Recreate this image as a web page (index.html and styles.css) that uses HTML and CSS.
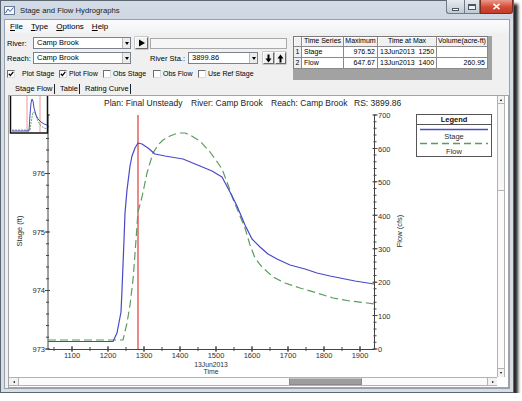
FILE: index.html
```html
<!DOCTYPE html>
<html>
<head>
<meta charset="utf-8">
<title>Stage and Flow Hydrographs</title>
<link rel="stylesheet" href="styles.css">
</head>
<body>
<div class="window">
  <div class="titlebar">
    <svg class="appicon" width="11" height="9" viewBox="0 0 11 9">
      <rect x="0.5" y="0.5" width="10" height="8" fill="#f4f7fb" stroke="#6a7c96"/>
      <polyline points="1.5,7 4,3 6,5.5 9.5,1.5" fill="none" stroke="#3a62b8" stroke-width="1"/>
    </svg>
    <span class="title">Stage and Flow Hydrographs</span>
    <div class="caption">
      <div class="cbtn cmin"><i></i></div>
      <div class="cbtn cmax"><i></i></div>
      <div class="cbtn cclose">
        <svg width="9" height="7" viewBox="0 0 9 7"><path d="M1.5 0.8 L7.5 6.2 M7.5 0.8 L1.5 6.2" stroke="#ffffff" stroke-width="1.6"/></svg>
      </div>
    </div>
  </div>
  <div class="client">
    <div class="menubar">
      <span><u>F</u>ile</span>
      <span><u>T</u>ype</span>
      <span><u>O</u>ptions</span>
      <span><u>H</u>elp</span>
    </div>
    <div class="top">
      <div class="leftcol">
        <div class="row">
          <span class="lbl lbl-river">River:</span>
          <div class="combo combo-wide"><span class="val">Camp Brook</span><span class="drop"></span></div>
          <div class="btn btn-play">
            <svg width="9" height="8" viewBox="0 0 9 8"><polygon points="2,0.5 2,7.5 8,4" fill="#000"/></svg>
          </div>
          <div class="textbox"></div>
        </div>
        <div class="row row2">
          <span class="lbl lbl-river">Reach:</span>
          <div class="combo combo-wide"><span class="val">Camp Brook</span><span class="drop"></span></div>
          <span class="lbl lbl-sta">River Sta.:</span>
          <div class="combo combo-sta"><span class="val">3899.86</span><span class="drop"></span></div>
          <div class="btn btn-arrow btn-down">
            <svg width="7" height="9" viewBox="0 0 7 9"><rect x="2.5" y="0.5" width="2" height="4.5" fill="#000"/><polygon points="0.5,4.5 6.5,4.5 3.5,8.5" fill="#000"/></svg>
          </div>
          <div class="btn btn-arrow btn-up">
            <svg width="7" height="9" viewBox="0 0 7 9"><rect x="2.5" y="4" width="2" height="4.5" fill="#000"/><polygon points="0.5,4.5 6.5,4.5 3.5,0.5" fill="#000"/></svg>
          </div>
        </div>
        <div class="checks">
          <label class="chk chk-first"><span class="box on"><svg width="6" height="6" viewBox="0 0 6 6"><path d="M0.8 2.8 L2.4 4.6 L5.3 0.9" fill="none" stroke="#000" stroke-width="1.3"/></svg></span>Plot Stage</label>
          <label class="chk"><span class="box on"><svg width="6" height="6" viewBox="0 0 6 6"><path d="M0.8 2.8 L2.4 4.6 L5.3 0.9" fill="none" stroke="#000" stroke-width="1.3"/></svg></span>Plot Flow</label>
          <label class="chk"><span class="box"></span>Obs Stage</label>
          <label class="chk"><span class="box"></span>Obs Flow</label>
          <label class="chk"><span class="box"></span>Use Ref Stage</label>
        </div>
      </div>
      <div class="gridwrap">
        <div class="tbl">
          <div class="th"></div>
          <div class="th">Time Series</div>
          <div class="th">Maximum</div>
          <div class="th">Time at Max</div>
          <div class="th">Volume(acre-ft)</div>
          <div class="rn">1</div>
          <div class="td">Stage</div>
          <div class="td num">976.52</div>
          <div class="td">13Jun2013  1250</div>
          <div class="td num"></div>
          <div class="rn">2</div>
          <div class="td">Flow</div>
          <div class="td num">647.67</div>
          <div class="td">13Jun2013  1400</div>
          <div class="td num">260.95</div>
        </div>
      </div>
    </div>
    <div class="tabs">
      <span class="tab">Stage Flow</span>
      <span class="tab">Table</span>
      <span class="tab">Rating Curve</span>
    </div>
    <div class="plotpanel">
      <svg class="chart" width="488" height="281" viewBox="9 96 488 281">
        <!-- title -->
        <text class="ttl" y="106"><tspan x="104">Plan: Final Unsteady</tspan><tspan x="191">River: Camp Brook</tspan><tspan x="271">Reach: Camp Brook</tspan><tspan x="354">RS: 3899.86</tspan></text>

        <!-- axes -->
        <path d="M48 115 V349.5 H374.5 V115" fill="none" stroke="#444" stroke-width="1"/>
        <line x1="47.5" y1="349.5" x2="47.5" y2="114" stroke="#444" stroke-width="3" stroke-dasharray="1 10.7"/>
        <line x1="47.5" y1="349.5" x2="47.5" y2="114" stroke="#444" stroke-width="5" stroke-dasharray="1 57.5"/>
        <line x1="375" y1="349.5" x2="375" y2="114" stroke="#444" stroke-width="3" stroke-dasharray="1 5.686"/>
        <line x1="375" y1="349.5" x2="375" y2="114" stroke="#444" stroke-width="5" stroke-dasharray="1 32.43"/>
        <line x1="53.5" y1="349" x2="374" y2="349" stroke="#444" stroke-width="4" stroke-dasharray="1 17"/>
        <line x1="71.5" y1="349" x2="374" y2="349" stroke="#444" stroke-width="6" stroke-dasharray="1 35"/>

        <!-- left labels -->
        <text class="lab" x="45" y="176" text-anchor="end">976</text>
        <text class="lab" x="45" y="235" text-anchor="end">975</text>
        <text class="lab" x="45" y="293" text-anchor="end">974</text>
        <text class="lab" x="45" y="352" text-anchor="end">973</text>
        <!-- right labels -->
        <text class="lab" x="378" y="118">700</text>
        <text class="lab" x="378" y="151.5">600</text>
        <text class="lab" x="378" y="185">500</text>
        <text class="lab" x="378" y="218.5">400</text>
        <text class="lab" x="378" y="252">300</text>
        <text class="lab" x="378" y="285">200</text>
        <text class="lab" x="378" y="318.5">100</text>
        <text class="lab" x="378" y="352">0</text>
        <!-- bottom labels -->
        <text class="lab" x="72" y="358.3" text-anchor="middle">1100</text>
        <text class="lab" x="108" y="358.3" text-anchor="middle">1200</text>
        <text class="lab" x="144" y="358.3" text-anchor="middle">1300</text>
        <text class="lab" x="180" y="358.3" text-anchor="middle">1400</text>
        <text class="lab" x="216" y="358.3" text-anchor="middle">1500</text>
        <text class="lab" x="252" y="358.3" text-anchor="middle">1600</text>
        <text class="lab" x="288" y="358.3" text-anchor="middle">1700</text>
        <text class="lab" x="324" y="358.3" text-anchor="middle">1800</text>
        <text class="lab" x="360" y="358.3" text-anchor="middle">1900</text>
        <text class="lab sm" x="211" y="366.6" text-anchor="middle">13Jun2013</text>
        <text class="lab sm" x="211" y="374.3" text-anchor="middle">Time</text>
        <text class="lab" transform="translate(21.5 231) rotate(-90)" text-anchor="middle">Stage (ft)</text>
        <text class="lab" transform="translate(402 231) rotate(-90)" text-anchor="middle">Flow (cfs)</text>

        <!-- red marker -->
        <line x1="138" y1="115" x2="138" y2="349" stroke="#e24a4a" stroke-width="1.3"/>

        <!-- flow (green dashed) -->
        <polyline class="flow" points="48,340 123,340 127,323 130,305 133,280 136,240 138,212 142,197 147,173 153,153 158,145 163,140 170,136 178,133 185,133 190,135 200,141 210,152 218,163 222,169 227,182 233,199 240,216 245,228 250,245 255,258 262,267 273,277 285,283 300,288 317,293 333,298 350,301 367,303 374,304"/>
        <!-- stage (blue) -->
        <polyline class="stage" points="48,341.5 113,341.5 117,333 121,312 122,290 124,240 125,213 127,190 130,166 132,156 135,148 138,143 142,144 148,148 155,154 165,156 183,159 200,166 212,171 222,177 230,192 237,206 245,225 252,239 260,247 268,254 277,259 290,265 305,269 317,273 330,276 340,278 355,281 374,284"/>

        <!-- thumbnail -->
        <rect x="10.5" y="95" width="37" height="38" fill="#fff" stroke="#111" stroke-width="1.5"/>
        <line x1="27" y1="96" x2="27" y2="132" stroke="#e58080" stroke-width="0.8"/>
        <line x1="40" y1="96" x2="40" y2="132" stroke="#e58080" stroke-width="0.8"/>
        <polyline points="12,130 30,130 31.5,120 33,112 35,113 37,119 40,125 44,128 47,129" fill="none" stroke="#4f8f5f" stroke-width="0.8" stroke-dasharray="2 1"/>
        <polyline points="12,131 29,131 30,115 31,103 32,99 33,101 34,108 36,115 38,119 41,122 44,124 47,125" fill="none" stroke="#4646c4" stroke-width="1"/>

        <!-- legend -->
        <rect x="416.5" y="114.5" width="75" height="42" fill="#fff" stroke="#555"/>
        <text class="lab leg-h" x="454" y="122" text-anchor="middle">Legend</text>
        <line x1="416.5" y1="124.5" x2="491.5" y2="124.5" stroke="#555"/>
        <line x1="420" y1="129.5" x2="488" y2="129.5" stroke="#4b4bd0" stroke-width="1.3"/>
        <text class="lab" x="454" y="139" text-anchor="middle">Stage</text>
        <line x1="420" y1="143.5" x2="488" y2="143.5" stroke="#4fa453" stroke-width="1.3" stroke-dasharray="7 4"/>
        <text class="lab" x="454" y="153.5" text-anchor="middle">Flow</text>
      </svg>
      <div class="vscroll">
        <div class="sarrow"><i class="tri-up"></i></div>
        <div class="vthumb"></div>
        <div class="strack"></div>
        <div class="sarrow sarrow-down"><i class="tri-down"></i></div>
      </div>
      <div class="hscroll">
        <div class="harrow"><i class="tri-left"></i></div>
        <div class="htrack1"></div>
        <div class="hthumb"></div>
        <div class="htrack2"></div>
        <div class="harrow harrow-right"><i class="tri-right"></i></div>
      </div>
    </div>
  </div>
</div>
</body>
</html>
```

FILE: styles.css
```css
* { box-sizing: border-box; }

body {
  margin: 0;
  background: #ffffff;
  font-family: "Liberation Sans", Arial, sans-serif;
  color: #000;
}

.window {
  width: 514px;
  height: 393px;
  border: 1px solid #5c6670;
  background: linear-gradient(#d3dce7, #cdd6e1 18px, #d7dde4 19px, #d9dee4);
  padding: 0 3px 3px 3px;
  display: flex;
  flex-direction: column;
  box-shadow: 4px 4px 3px rgba(0, 0, 0, 0.85);
}

/* ---------- title bar ---------- */
.titlebar {
  height: 18px;
  display: flex;
  align-items: center;
}
.appicon { display: block; flex: none; margin-top: 1px; }
.title {
  margin-left: 5px;
  font-size: 7.7px;
  color: #1b1b1b;
}
.caption {
  margin-left: auto;
  margin-right: -3px;
  margin-top: -1px;
  align-self: flex-start;
  display: flex;
  flex: none;
  height: 14px;
}
.cbtn {
  flex: none;
  height: 14px;
  display: flex;
  align-items: center;
  justify-content: center;
  border: 1px solid #6f7a86;
  border-top: none;
}
.cmin {
  width: 18px;
  background: linear-gradient(#e6ebf0, #c0c9d4);
  border-bottom-left-radius: 3px;
  border-right: none;
}
.cmin i { display: block; width: 7px; height: 3px; background: #fff; border: 1px solid #4d5660; margin-top: 5px; }
.cmax {
  width: 16px;
  background: linear-gradient(#e6ebf0, #c0c9d4);
}
.cmax i { display: block; width: 8px; height: 6px; border: 1px solid #4d5660; border-top-width: 2px; background: #eef2f6; }
.cclose {
  width: 33px;
  background: linear-gradient(#eb9a8a, #d24a34 55%, #c43c28);
  border-color: #7a2d22;
  border-bottom-right-radius: 3px;
}
.cclose svg { display: block; }

/* ---------- client ---------- */
.client {
  flex: 1;
  min-height: 0;
  border: 1px solid #97a1ac;
  background: #f0f0f0;
  display: flex;
  flex-direction: column;
}

.menubar {
  height: 13px;
  display: flex;
  align-items: center;
  gap: 8px;
  padding-left: 5px;
  font-size: 8px;
  background: linear-gradient(#fbfbfc, #f1f3f5);
}

.top {
  display: flex;
  padding-top: 3px;
}
.leftcol {
  width: 288px;
  padding-left: 2px;
  padding-top: 1px;
}
.row {
  display: flex;
  align-items: center;
  height: 12px;
}
.row2 { margin-top: 3px; }
.lbl { font-size: 7.5px; white-space: nowrap; }
.lbl-river { width: 26px; }
.lbl-sta { width: 38px; margin-left: 19px; }

.combo {
  height: 12px;
  border: 1px solid #7c828c;
  background: #fff;
  display: flex;
  font-size: 7.5px;
}
.combo-wide { width: 98px; }
.combo-sta { width: 70px; }
.combo .val { flex: 1; padding-left: 3px; line-height: 10px; }
.drop {
  width: 8px;
  background: #ececec;
  border-left: 1px solid #b9b9b9;
  display: flex;
  align-items: center;
  justify-content: center;
}
.drop::after {
  content: "";
  border-left: 2.5px solid transparent;
  border-right: 2.5px solid transparent;
  border-top: 3px solid #000;
}

.btn {
  height: 12px;
  background: #f0f0f0;
  border: 1px solid;
  border-color: #ffffff #6a6a6a #6a6a6a #ffffff;
  box-shadow: 0 0 0 0.5px #a0a0a0;
  display: flex;
  align-items: center;
  justify-content: center;
}
.btn svg { display: block; }
.btn-play { width: 13px; margin-left: 4px; }
.btn-arrow { width: 11px; }
.btn-down { margin-left: 5px; }
.btn-up { margin-left: 1px; }

.textbox {
  width: 137px;
  height: 11px;
  margin-left: 2px;
  border: 1px solid #a9a9a9;
  background: #f6f6f6;
}

.checks {
  margin-top: 4px;
  height: 11px;
  display: grid;
  grid-template-columns: 52px 44px 50px 45px auto;
  align-items: center;
  font-size: 7px;
}
.chk { display: flex; align-items: center; white-space: nowrap; }
.box {
  width: 8px;
  height: 8px;
  margin-right: 2px;
  background: #fff;
  border: 1px solid;
  border-color: #6f6f6f #dcdcdc #dcdcdc #6f6f6f;
  display: flex;
  align-items: center;
  justify-content: center;
}
.box svg { display: block; }
.chk-first .box { margin-right: 7px; }

/* ---------- table ---------- */
.gridwrap {
  width: 199px;
  height: 44px;
  background: #a2a2a2;
}
.tbl {
  display: grid;
  grid-template-columns: 8px 42px 34px 59px 51px;
  grid-template-rows: 10px 11px 11px;
  width: 195px;
  border-left: 1px solid #7a7a7a;
  border-top: 1px solid #7a7a7a;
}
.tbl > div {
  border-right: 1px solid #8a8a8a;
  border-bottom: 1px solid #8a8a8a;
  font-size: 7px;
  line-height: 9px;
  padding: 0 2px;
  white-space: pre;
  overflow: hidden;
  background: #fff;
}
.tbl > .th {
  background: #f0f0f0;
  text-align: center;
  padding: 0 1px;
  line-height: 8px;
  box-shadow: inset 1px 1px 0 #fff;
}
.tbl > .rn {
  background: #f0f0f0;
  text-align: center;
  padding: 0;
}
.tbl > .num { text-align: right; }

/* ---------- tabs ---------- */
.tabs {
  margin-top: 2px;
  height: 13px;
  display: flex;
  align-items: center;
  padding-left: 10px;
  font-size: 7.5px;
}
.tab {
  padding: 0 1px 0 5px;
  border-right: 1px solid #222;
  line-height: 10px;
}
.tab:first-child { padding-left: 0; padding-right: 1.5px; }

/* ---------- plot panel ---------- */
.plotpanel {
  flex: 1;
  min-height: 0;
  margin-left: 3px;
  border: 1px solid #a3a3a3;
  background: #fff;
  display: grid;
  grid-template-columns: 488px 8px;
  grid-template-rows: 281px 9px;
  padding: 0 3px 1px 0;
}
.chart { display: block; grid-column: 1; grid-row: 1; }
.chart text { font-family: "Liberation Sans", Arial, sans-serif; }
.chart .lab { font-size: 7.5px; fill: #2e2e2e; }
.chart .sm { font-size: 6.8px; }
.chart .ttl { font-size: 8.5px; fill: #222; }
.chart .leg-h { font-weight: bold; fill: #111; }
.chart .stage { fill: none; stroke: #4848c8; stroke-width: 1.2; stroke-linejoin: round; }
.chart .flow { fill: none; stroke: #5a9e5e; stroke-width: 1.2; stroke-dasharray: 8 4; stroke-linejoin: round; }

.vscroll {
  grid-column: 2;
  grid-row: 1;
  display: flex;
  flex-direction: column;
  border-left: 1px solid #b3b3b3;
  border-right: 1px solid #b3b3b3;
  background: #fbfbfb;
}
.sarrow {
  height: 8px;
  display: flex;
  align-items: center;
  justify-content: center;
  border-bottom: 1px solid #b3b3b3;
  background: #f2f2f2;
}
.sarrow-down { border-bottom: none; border-top: 1px solid #b3b3b3; height: 9px; }
.vthumb {
  height: 87px;
  border-bottom: 1px solid #b3b3b3;
  background: #f7f7f7;
}
.strack { flex: 1; }

.hscroll {
  grid-column: 1;
  grid-row: 2;
  display: flex;
  border-top: 1px solid #b3b3b3;
  border-bottom: 1px solid #b3b3b3;
  background: #fbfbfb;
}
.harrow {
  width: 10px;
  display: flex;
  align-items: center;
  justify-content: center;
  border-right: 1px solid #b3b3b3;
  background: #f2f2f2;
}
.harrow-right { border-right: none; border-left: 1px solid #b3b3b3; }
.htrack1 { width: 270px; }
.hthumb {
  width: 73px;
  background: #9d9d9d;
  border: 1px solid #8a8a8a;
  border-top-color: #c4c4c4;
}
.htrack2 { flex: 1; }

.tri-up, .tri-down, .tri-left, .tri-right { display: block; width: 0; height: 0; }
.tri-up { border-left: 1.5px solid transparent; border-right: 1.5px solid transparent; border-bottom: 2px solid #000; }
.tri-down { border-left: 1.5px solid transparent; border-right: 1.5px solid transparent; border-top: 2px solid #000; }
.tri-left { border-top: 1.5px solid transparent; border-bottom: 1.5px solid transparent; border-right: 2px solid #000; }
.tri-right { border-top: 1.5px solid transparent; border-bottom: 1.5px solid transparent; border-left: 2px solid #000; }
```
